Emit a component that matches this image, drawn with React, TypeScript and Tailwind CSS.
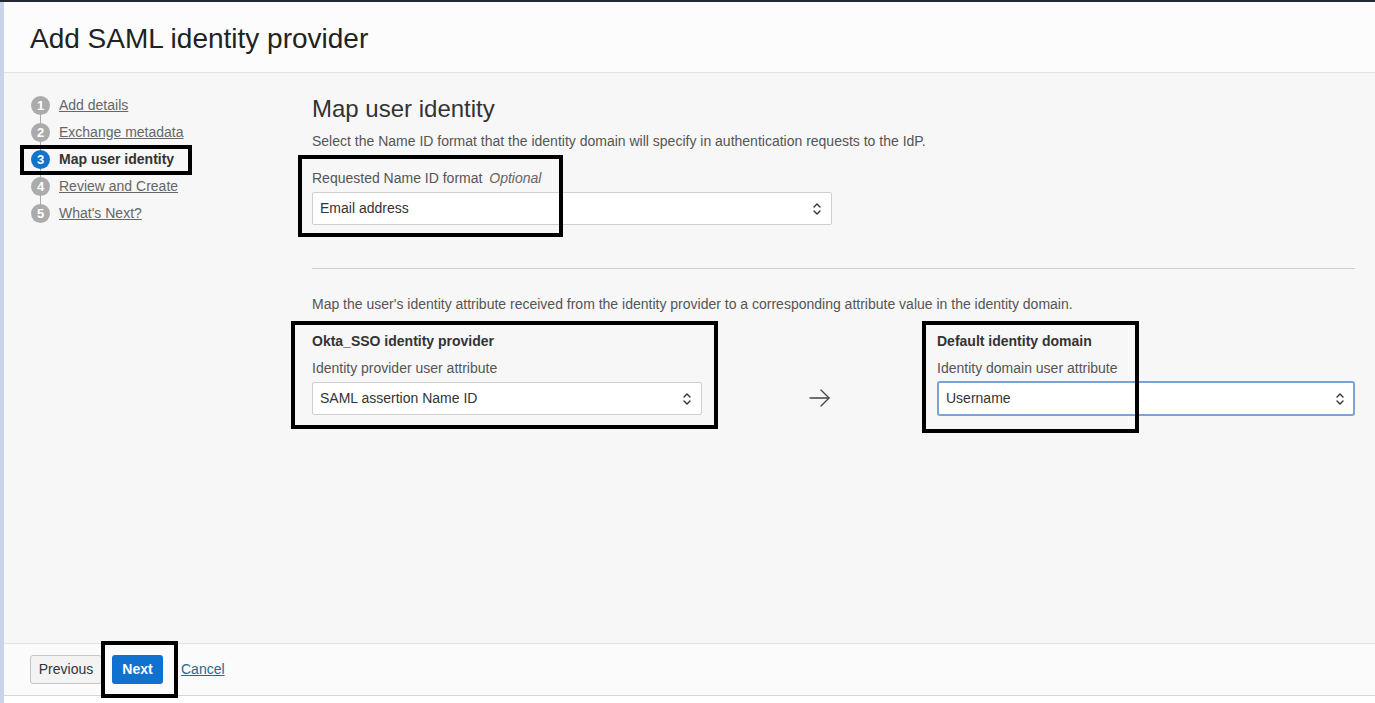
import React from "react";

const steps = [
  { n: 1, label: "Add details" },
  { n: 2, label: "Exchange metadata" },
  { n: 3, label: "Map user identity", active: true },
  { n: 4, label: "Review and Create" },
  { n: 5, label: "What's Next?" },
];

function UpDown() {
  return (
    <svg width="10" height="16" viewBox="0 0 10 16" fill="none" stroke="#333" strokeWidth="1.4" strokeLinecap="round" strokeLinejoin="round">
      <path d="M2 6 L5 3 L8 6" />
      <path d="M2 10 L5 13 L8 10" />
    </svg>
  );
}

function SelectBox({ value, focused }: { value: string; focused?: boolean }) {
  return (
    <div
      className={
        focused
          ? "flex h-[35px] items-center justify-between rounded-[3px] border-2 border-[#7ba3d5] bg-white pl-[7px] pr-[8px] text-[14px] text-[#333]"
          : "flex h-[33px] items-center justify-between rounded-[2px] border border-[#cfcfcf] bg-white pl-[7px] pr-[9px] text-[14px] text-[#333]"
      }
    >
      <span>{value}</span>
      <UpDown />
    </div>
  );
}

function Annot({ className }: { className: string }) {
  return <div className={"pointer-events-none absolute border-[4px] border-black " + className} />;
}

export default function App() {
  return (
    <div className="relative flex h-[703px] w-full flex-col overflow-hidden bg-white font-['Liberation_Sans',Arial,sans-serif]">
      <div className="h-[2px] bg-[#232a36]" />
      <div className="flex flex-1">
        <div className="w-[4px] bg-[#c9d4ea]" />
        <div className="flex flex-1 flex-col">
          <header className="flex h-[71px] items-center border-b border-[#e3e3e3] bg-[#fcfcfc] pl-[26px] pt-[4px]">
            <h1 className="text-[28px] text-[#222]">Add SAML identity provider</h1>
          </header>

          <div className="flex flex-1 bg-[#f7f7f7]">
            <nav className="w-[308px] pl-[27px] pt-[19px]">
              {steps.map((s, i) => (
                <div key={s.n} className="relative flex h-[27px] items-center gap-[9px]">
                  {i < steps.length - 1 && (
                    <div className="absolute left-[9px] top-[18px] h-[18px] w-px bg-[#aaa]" />
                  )}
                  <div
                    className={
                      "relative flex h-[19px] w-[19px] items-center justify-center rounded-full text-[13px] font-bold text-white " +
                      (s.active ? "bg-[#1273cc]" : "bg-[#ababab]")
                    }
                  >
                    {s.n}
                  </div>
                  {s.active ? (
                    <span className="text-[14px] font-bold text-[#333]">{s.label}</span>
                  ) : (
                    <a className="text-[14px] text-[#666] underline">{s.label}</a>
                  )}
                </div>
              ))}
            </nav>

            <main className="flex-1 pr-[20px] pt-[22px]">
              <h2 className="text-[24px] leading-[28px] text-[#333]">Map user identity</h2>
              <p className="mt-[10px] text-[14px] leading-[16px] text-[#555]">
                Select the Name ID format that the identity domain will specify in authentication requests to the IdP.
              </p>

              <div className="mt-[21px] w-[520px]">
                <div className="text-[14px] leading-[16px] text-[#555]">
                  Requested Name ID format <span className="ml-[3px] italic text-[#666]">Optional</span>
                </div>
                <div className="mt-[6px]">
                  <SelectBox value="Email address" />
                </div>
              </div>

              <div className="mt-[43px] h-px bg-[#cfcfcf]" />

              <p className="mt-[27px] text-[14px] leading-[16px] text-[#555]">
                Map the user's identity attribute received from the identity provider to a corresponding attribute value in the identity domain.
              </p>

              <div className="mt-[21px] flex">
                <div className="w-[390px]">
                  <div className="text-[14px] font-bold leading-[16px] text-[#333]">Okta_SSO identity provider</div>
                  <div className="mt-[11px] text-[14px] leading-[16px] text-[#555]">Identity provider user attribute</div>
                  <div className="mt-[6px]">
                    <SelectBox value="SAML assertion Name ID" />
                  </div>
                </div>
                <div className="flex w-[235px] items-end justify-center pb-[8px]">
                  <svg width="24" height="20" viewBox="0 0 24 20" fill="none" stroke="#444" strokeWidth="1.3" strokeLinecap="round" strokeLinejoin="round">
                    <path d="M2 10 H21" />
                    <path d="M13 2 L21 10 L13 18" />
                  </svg>
                </div>
                <div className="flex-1">
                  <div className="text-[14px] font-bold leading-[16px] text-[#333]">Default identity domain</div>
                  <div className="mt-[11px] text-[14px] leading-[16px] text-[#555]">Identity domain user attribute</div>
                  <div className="mt-[5px]">
                    <SelectBox value="Username" focused />
                  </div>
                </div>
              </div>
            </main>
          </div>

          <footer className="flex h-[53px] items-center gap-[10px] border-y border-[#d6d6d6] border-t-[#e3e3e3] bg-[#fbfbfb] pl-[26px]">
            <button className="h-[29px] w-[72px] rounded-[3px] border border-[#c6c6c6] bg-[#f3f3f3] text-[14px] text-[#333]">
              Previous
            </button>
            <button className="h-[29px] w-[51px] rounded-[3px] bg-[#1171cf] text-[14px] font-bold text-white">
              Next
            </button>
            <a className="ml-[8px] text-[14px] text-[#256a93] underline">Cancel</a>
          </footer>
          <div className="h-[7px] bg-white" />
        </div>
      </div>

      <Annot className="left-[20px] top-[145px] h-[30px] w-[172px]" />
      <Annot className="left-[298px] top-[155px] h-[82px] w-[265px]" />
      <Annot className="left-[291px] top-[321px] h-[108px] w-[427px]" />
      <Annot className="left-[922px] top-[321px] h-[112px] w-[217px]" />
      <Annot className="left-[101px] top-[641px] h-[57px] w-[77px]" />
    </div>
  );
}
